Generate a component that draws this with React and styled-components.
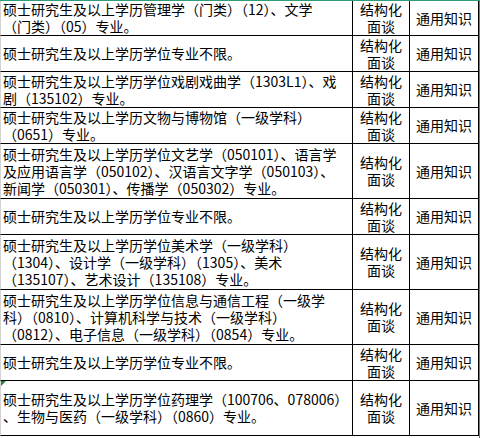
import React from 'react';
import styled, { createGlobalStyle } from 'styled-components';

const GlobalStyle = createGlobalStyle`
  body {
    margin: 0;
    background: #ffffff;
    font-family: "Noto Sans CJK SC", "Noto Sans", sans-serif;
  }
`;

const Sheet = styled.div`
  width: 480px;
  height: 438px;
  box-sizing: border-box;
  border-top: 1px solid #2f9e78;
  border-right: 1px solid #2f9e78;
  background: #ffffff;
  overflow: hidden;
`;

const Grid = styled.div`
  display: grid;
  grid-template-columns: 353px 57px 69px;
`;

const Cell = styled.div`
  position: relative;
  box-sizing: border-box;
  height: ${(props) => props.$h}px;
  display: flex;
  flex-direction: column;
  justify-content: center;
  align-items: ${(props) => (props.$center ? 'center' : 'flex-start')};
  text-align: ${(props) => (props.$center ? 'center' : 'left')};
  padding: 0 2px;
  border-right: 1px solid #000000;
  border-bottom: 1px solid #000000;
  border-left: ${(props) => (props.$first ? '1px solid #d4d4d4' : 'none')};
  font-size: 14px;
  line-height: 17px;
  color: #000000;
  white-space: nowrap;

  ${(props) =>
    props.$flag &&
    `
    &::before {
      content: '';
      position: absolute;
      top: 0;
      left: 0;
      width: 0;
      height: 0;
      border-top: 5px solid #1f8a3a;
      border-right: 5px solid transparent;
    }
  `}
`;

const Line = styled.span`
  display: block;
`;

const rows = [
  { h: 35, lines: ['硕士研究生及以上学历管理学（门类）（12）、文学', '（门类）（05）专业。'] },
  { h: 36, lines: ['硕士研究生及以上学历学位专业不限。'] },
  { h: 36, lines: ['硕士研究生及以上学历学位戏剧戏曲学（1303L1）、戏', '剧（135102）专业。'] },
  { h: 36, lines: ['硕士研究生及以上学历文物与博物馆（一级学科）', '（0651）专业。'] },
  {
    h: 55,
    lines: [
      '硕士研究生及以上学历学位文艺学（050101）、语言学',
      '及应用语言学（050102）、汉语言文字学（050103）、',
      '新闻学（050301）、传播学（050302）专业。',
    ],
  },
  { h: 36, lines: ['硕士研究生及以上学历学位专业不限。'] },
  {
    h: 55,
    lines: [
      '硕士研究生及以上学历学位美术学（一级学科）',
      '（1304）、设计学（一级学科）（1305）、美术',
      '（135107）、艺术设计（135108）专业。',
    ],
  },
  {
    h: 55,
    lines: [
      '硕士研究生及以上学历学位信息与通信工程（一级学',
      '科）（0810）、计算机科学与技术（一级学科）',
      '（0812）、电子信息（一级学科）（0854）专业。',
    ],
  },
  { h: 36, lines: ['硕士研究生及以上学历学位专业不限。'] },
  {
    h: 55,
    flag: true,
    lines: ['硕士研究生及以上学历学位药理学（100706、078006）', '、生物与医药（一级学科）（0860）专业。'],
  },
];

const App = () => {
  return (
    <>
      <GlobalStyle />
      <Sheet>
        <Grid>
          {rows.map((row, i) => (
            <React.Fragment key={i}>
              <Cell $h={row.h} $first $flag={row.flag}>
                {row.lines.map((t, j) => (
                  <Line key={j}>{t}</Line>
                ))}
              </Cell>
              <Cell $h={row.h} $center>
                <Line>结构化</Line>
                <Line>面谈</Line>
              </Cell>
              <Cell $h={row.h} $center>
                <Line>通用知识</Line>
              </Cell>
            </React.Fragment>
          ))}
        </Grid>
      </Sheet>
    </>
  );
};

export default App;
